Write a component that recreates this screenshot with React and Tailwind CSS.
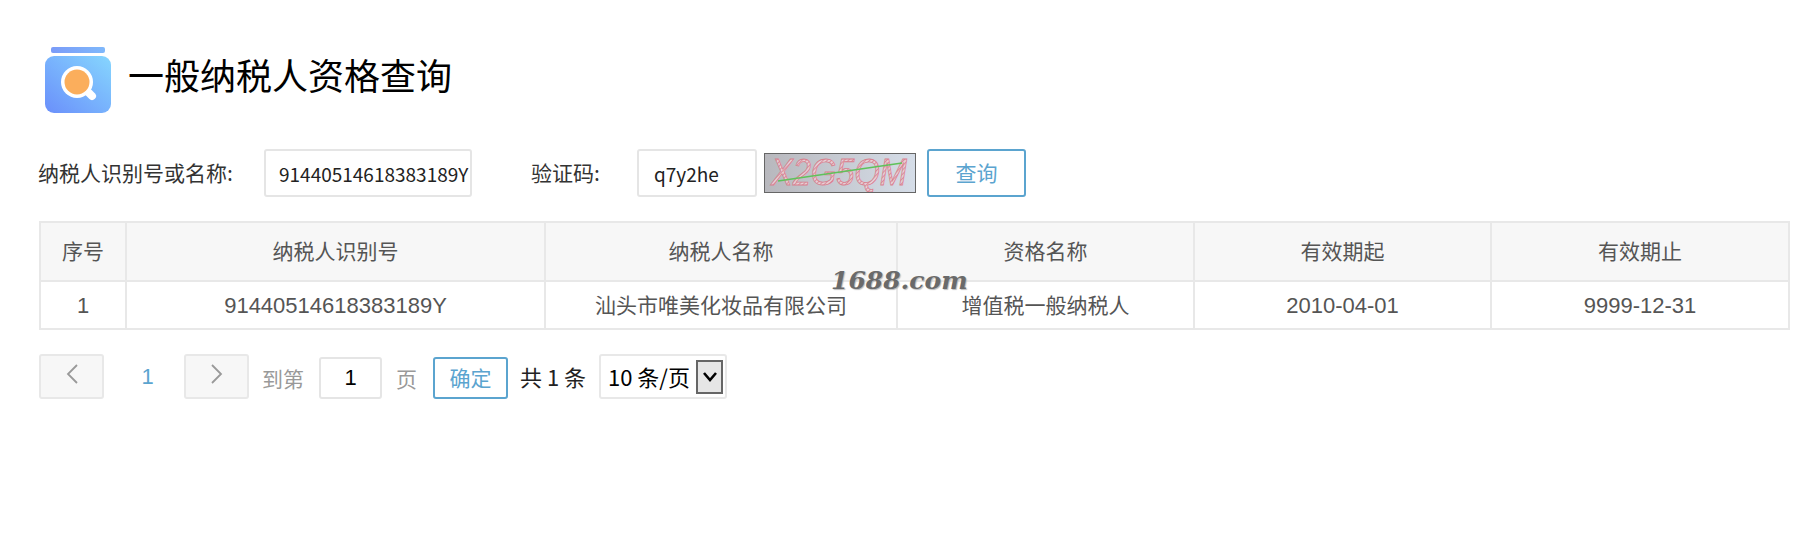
const cols = [
  { title: "序号", value: "1", w: "w-[86px]", num: true },
  { title: "纳税人识别号", value: "91440514618383189Y", w: "w-[419px]", num: true },
  { title: "纳税人名称", value: "汕头市唯美化妆品有限公司", w: "w-[352px]" },
  { title: "资格名称", value: "增值税一般纳税人", w: "w-[297px]" },
  { title: "有效期起", value: "2010-04-01", w: "w-[297px]", num: true },
  { title: "有效期止", value: "9999-12-31", w: "w-[298px]", num: true },
];

const font = "font-['Noto_Sans_CJK_SC','Noto_Sans',sans-serif]";
const latin = "font-['Liberation_Sans',sans-serif]";

const Logo = () => (
  <svg width="66" height="66" viewBox="0 0 66 66" className="shrink-0">
    <defs>
      <linearGradient id="jar" x1="0" y1="1" x2="1" y2="0">
        <stop offset="0" stopColor="#6a8ffb" />
        <stop offset="1" stopColor="#86d6fe" />
      </linearGradient>
      <linearGradient id="lid" x1="0" y1="0" x2="1" y2="0">
        <stop offset="0" stopColor="#7a9bf8" />
        <stop offset="1" stopColor="#7fb8fb" />
      </linearGradient>
    </defs>
    <rect x="6" y="0" width="54" height="6" rx="2" fill="url(#lid)" />
    <rect x="0" y="9" width="66" height="57" rx="9" fill="url(#jar)" />
    <path d="M44 46l3 3" stroke="#fff" strokeWidth="8" strokeLinecap="round" />
    <circle cx="32" cy="35" r="16" fill="#fff" />
    <circle cx="32" cy="35" r="12.5" fill="#fbae5c" />
  </svg>
);

const Captcha = () => (
  <svg width="152" height="40" viewBox="0 0 150 38" className="shrink-0 ml-[7px] border border-[#666]">
    <defs>
      <linearGradient id="cap" x1="0" y1="0" x2="1" y2="0">
        <stop offset="0" stopColor="#b8b8bd" />
        <stop offset="1" stopColor="#d5dde8" />
      </linearGradient>
      <pattern id="hatch" width="3" height="3" patternUnits="userSpaceOnUse" patternTransform="rotate(45)">
        <rect width="3" height="3" fill="#e6d2d8" />
        <rect width="1.1" height="3" fill="#dc8c9a" />
      </pattern>
    </defs>
    <rect width="150" height="38" fill="url(#cap)" />
    <text
      x="6"
      y="31"
      fontFamily="Liberation Sans"
      fontStyle="italic"
      fontSize="36"
      textLength="136"
      lengthAdjust="spacingAndGlyphs"
      fill="url(#hatch)"
      stroke="#d9808f"
      strokeWidth="0.8"
    >
      X2G5QM
    </text>
    <path d="M13 27L137 9" stroke="#5fc25a" strokeWidth="1.6" fill="none" />
  </svg>
);

const App = () => {
  return (
    <div className={`relative w-[1797px] h-[560px] bg-white overflow-hidden ${font}`}>

      {/* TITLE */}
      <div className="flex items-center gap-[17px] pl-[45px] pt-[47px]">
        <Logo />
        <h1 className="mb-[11px] text-[36px] leading-[55px] text-black">一般纳税人资格查询</h1>
      </div>

      {/* FORM */}
      <div className="flex items-center h-[48px] mt-[36px] pl-[38px]">
        <label className="w-[226px] text-[21px] text-[#333]">纳税人识别号或名称:</label>
        <input
          readOnly
          value="91440514618383189Y"
          className="w-[208px] h-[48px] pl-[13px] text-[19px] text-[#222] border-2 border-[#e5e5e5] rounded-[3px] outline-none"
        />
        <label className="w-[106px] ml-[59px] text-[21px] text-[#333]">验证码:</label>
        <input
          readOnly
          value="q7y2he"
          className="w-[120px] h-[48px] pl-[15px] text-[19px] text-[#222] border-2 border-[#e5e5e5] rounded-[3px] outline-none"
        />
        <Captcha />
        <button className="w-[99px] h-[48px] ml-[11px] text-[21px] text-[#5ba4cf] border-2 border-[#5ba4cf] rounded-[3px]">
          查询
        </button>
      </div>

      {/* TABLE */}
      <div className="ml-[39px] mt-[24px] w-[1751px]">
        <table className="table-fixed border-collapse text-center text-[21px] text-[#555]">
          <thead>
            <tr className="bg-[#f7f7f7] h-[59px]">
              {cols.map((c) => (
                <th key={c.title} className={`${c.w} pb-[2px] font-normal border-2 border-[#e8e8e8]`}>
                  {c.title}
                </th>
              ))}
            </tr>
          </thead>
          <tbody>
            <tr className="h-[48px]">
              {cols.map((c) => (
                <td key={c.title} className={`border-2 border-[#e8e8e8] ${c.num ? `${latin} text-[22px]` : ""}`}>
                  {c.value}
                </td>
              ))}
            </tr>
          </tbody>
        </table>
      </div>

      {/* PAGINATION */}
      <div className="flex items-center h-[45px] mt-[24px] ml-[39px] text-[21px]">
        <button className="flex items-center justify-center w-[65px] h-[45px] bg-[#f7f7f7] border-2 border-[#e8e8e8] rounded-[3px] pb-[6px]">
          <svg width="14" height="22" viewBox="0 0 14 22" fill="none" stroke="#999" strokeWidth="1.8">
            <path d="M12 2L3 11l9 9" />
          </svg>
        </button>
        <span className={`w-[80px] pl-[7px] text-center text-[22px] text-[#5ba4cf] ${latin}`}>1</span>
        <button className="flex items-center justify-center w-[65px] h-[45px] bg-[#f7f7f7] border-2 border-[#e8e8e8] rounded-[3px] pb-[6px]">
          <svg width="14" height="22" viewBox="0 0 14 22" fill="none" stroke="#999" strokeWidth="1.8">
            <path d="M2 2l9 9-9 9" />
          </svg>
        </button>
        <span className="ml-[13px] mt-[4px] text-[#999]">到第</span>
        <input
          readOnly
          value="1"
          className={`w-[63px] h-[42px] ml-[15px] mt-[3px] text-center text-[22px] text-black border-2 border-[#e5e5e5] rounded-[3px] outline-none ${latin}`}
        />
        <span className="ml-[14px] mt-[4px] text-[#999]">页</span>
        <button className="w-[75px] h-[42px] ml-[16px] mt-[3px] text-[21px] text-[#5ba4cf] border-2 border-[#5ba4cf] rounded-[3px]">
          确定
        </button>
        <span className="w-[67px] ml-[12px] text-[22px] whitespace-nowrap text-[#222]">共 1 条</span>
        <div className="flex items-center justify-between w-[128px] h-[45px] ml-[12px] pl-[7px] pr-[2px] border-2 border-[#e8e8e8] rounded-[3px] text-[22px] whitespace-nowrap text-black">
          <span>10 条/页</span>
          <span className="flex items-center justify-center shrink-0 w-[27px] h-[34px] bg-[#e6e6e6] border-2 border-[#666]">
            <svg width="16" height="12" viewBox="0 0 16 12" fill="none" stroke="#000" strokeWidth="2.6">
              <path d="M2 2l6 7 6-7" />
            </svg>
          </span>
        </div>
      </div>

      {/* WATERMARK */}
      <div className="absolute left-[831px] top-[266px] font-['DejaVu_Serif',serif] italic font-bold text-[25px] leading-[30px] text-[#6a6a6a] [text-shadow:1px_1px_1px_#bbb]">
        1688.com
      </div>

    </div>
  );
};

export default App;
